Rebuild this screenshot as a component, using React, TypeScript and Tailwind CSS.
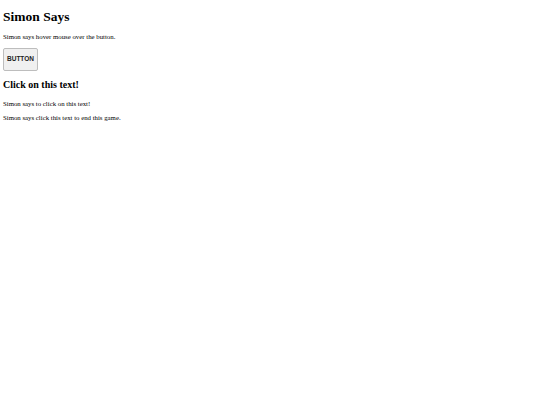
export default function App() {
  return (
    <div className="min-h-[405px] bg-white px-[3px] text-black" style={{ fontFamily: '"Liberation Serif", serif' }}>
      <h1 className="pt-[9px] text-[13.5px] font-bold leading-[16px]">Simon Says</h1>
      <p className="mt-[7px] text-[6.8px] leading-[9px]">Simon says hover mouse over the button.</p>
      <button
        className="mt-[7px] h-[23px] w-[35px] rounded-[2px] border border-[#bdbdbd] bg-[#f0f0f0] text-[6.5px] font-bold leading-none text-[#222]"
        style={{ fontFamily: '"Liberation Sans", sans-serif' }}
      >
        BUTTON
      </button>
      <h2 className="mt-[7px] text-[10px] font-bold leading-[13px]">Click on this text!</h2>
      <p className="mt-[8px] text-[6.8px] leading-[9px]">Simon says to click on this text!</p>
      <p className="mt-[5px] text-[6.8px] leading-[9px]">Simon says click this text to end this game.</p>
    </div>
  );
}
